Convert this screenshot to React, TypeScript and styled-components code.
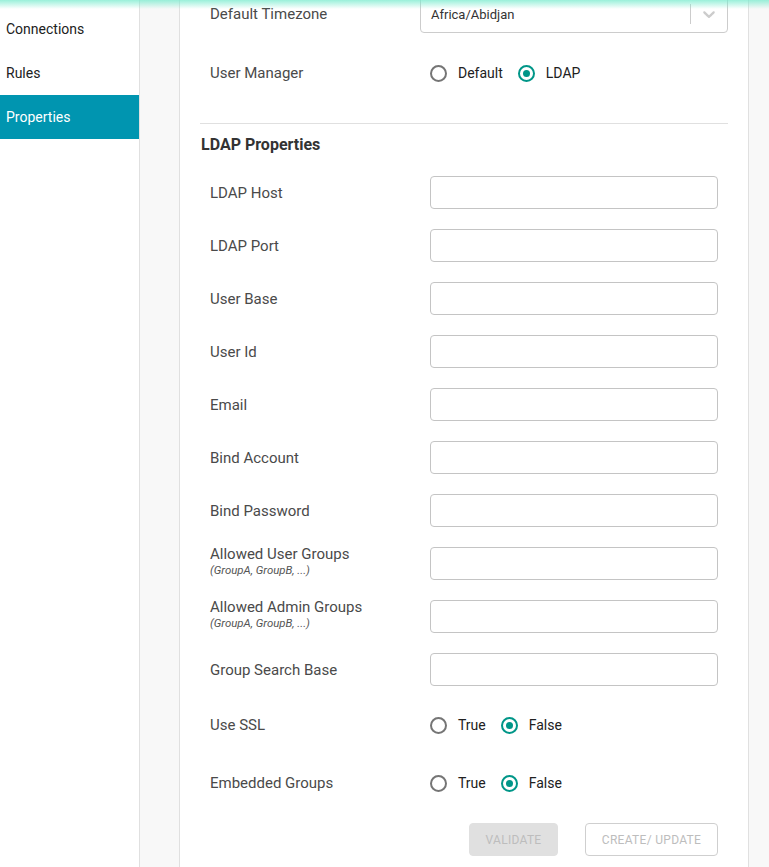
import React, { useState } from "react";
import styled, { createGlobalStyle } from "styled-components";

const GlobalStyle = createGlobalStyle`
  html, body {
    margin: 0;
    padding: 0;
    background: #f8f8f8;
    font-family: Roboto, "Liberation Sans", sans-serif;
    overflow: hidden;
  }
`;

const Page = styled.div`
  display: flex;
  height: 867px;
  overflow: hidden;
  position: relative;
`;

const HeaderGlow = styled.div`
  position: absolute;
  top: 0;
  left: 0;
  right: 0;
  height: 9px;
  background: linear-gradient(rgba(120, 235, 205, 0.75), rgba(160, 245, 220, 0));
  pointer-events: none;
  z-index: 5;
`;

const Sidebar = styled.nav`
  width: 139px;
  flex-shrink: 0;
  background: #fff;
  border-right: 1px solid #e0e0e0;
  padding-top: 7px;
  display: flex;
  flex-direction: column;
`;

const NavItem = styled.div<{ $active?: boolean }>`
  height: 44px;
  display: flex;
  align-items: center;
  padding-left: 6px;
  font-size: 14px;
  color: ${(p) => (p.$active ? "#fff" : "#212121")};
  background: ${(p) => (p.$active ? "#0095b0" : "transparent")};
  cursor: pointer;
`;

const Main = styled.main`
  flex: 1;
  padding-left: 39px;
  padding-right: 20px;
`;

const Card = styled.section`
  background: #fff;
  border-left: 1px solid #e0e0e0;
  border-right: 1px solid #e0e0e0;
  padding: 0 20px 40px 20px;
  margin-top: -5px;
`;

const TopRow = styled.div`
  display: grid;
  grid-template-columns: 210px 1fr;
  align-items: center;
  height: 38px;
  padding-left: 10px;
  & + & {
    margin-top: 21px;
  }
`;

const Label = styled.div`
  font-size: 15px;
  color: #4a4a4a;
  display: flex;
  flex-direction: column;
`;

const Hint = styled.span`
  font-size: 11.4px;
  font-style: italic;
  color: #555;
  margin-bottom: 6px;
`;

const Select = styled.div`
  height: 38px;
  box-sizing: border-box;
  border: 1px solid #ccc;
  border-radius: 4px;
  display: flex;
  align-items: center;
  padding-left: 10px;
  font-size: 13px;
  color: #333;
`;

const SelectValue = styled.span`
  flex: 1;
`;

const Separator = styled.span`
  width: 1px;
  align-self: stretch;
  margin: 8px 0;
  background: #ccc;
`;

const Chevron = styled.span`
  width: 36px;
  display: flex;
  justify-content: center;
  color: #ccc;
`;

const Divider = styled.hr`
  border: none;
  border-top: 1px solid #e0e0e0;
  margin: 31px 0 0 0;
`;

const Heading = styled.h3`
  margin: 11px 0 0 1px;
  font-size: 16px;
  line-height: 20px;
  font-weight: 700;
  color: #333;
`;

const FieldList = styled.div`
  display: flex;
  flex-direction: column;
  padding: 0 10px;
  margin-top: 21px;
`;

const FieldRow = styled.div<{ $tall?: boolean }>`
  display: grid;
  grid-template-columns: 220px 1fr;
  grid-template-rows: ${(p) => (p.$tall ? "38px" : "33px")};
  align-items: center;
  margin-bottom: 20px;
`;

const TextInput = styled.input`
  height: 33px;
  box-sizing: border-box;
  border: 1px solid #c4c4c4;
  border-radius: 4px;
  padding: 0 10px;
  font-size: 14px;
  outline: none;
`;

const RadioGroup = styled.div`
  display: flex;
  align-items: center;
  gap: 15px;
`;

const RadioOption = styled.label`
  display: flex;
  align-items: center;
  gap: 11px;
  font-size: 14px;
  color: #212121;
  cursor: pointer;
`;

const RadioCircle = styled.span<{ $checked?: boolean }>`
  width: 17px;
  height: 17px;
  box-sizing: border-box;
  border-radius: 50%;
  border: 2px solid ${(p) => (p.$checked ? "#009688" : "#757575")};
  display: flex;
  align-items: center;
  justify-content: center;
  &::after {
    content: "";
    width: 7px;
    height: 7px;
    border-radius: 50%;
    background: ${(p) => (p.$checked ? "#009688" : "transparent")};
  }
`;

const Actions = styled.div`
  display: flex;
  justify-content: flex-end;
  gap: 27px;
  margin-top: 1px;
`;

const Button = styled.button<{ $outlined?: boolean }>`
  height: 33px;
  box-sizing: border-box;
  border-radius: 4px;
  font-family: Roboto, "Liberation Sans", sans-serif;
  font-size: 12px;
  letter-spacing: 0.3px;
  text-transform: uppercase;
  color: #bdbdbd;
  padding: 0 15px;
  background: ${(p) => (p.$outlined ? "#fff" : "#e0e0e0")};
  border: 1px solid ${(p) => (p.$outlined ? "#cfcfcf" : "#e0e0e0")};
  width: ${(p) => (p.$outlined ? "133px" : "89px")};
`;

const ManagerChoice = styled.div`
  padding-left: 10px;
`;

function Radio({
  options,
  value,
  onChange,
}: {
  options: string[];
  value: string;
  onChange: (v: string) => void;
}) {
  return (
    <RadioGroup>
      {options.map((o) => (
        <RadioOption key={o} onClick={() => onChange(o)}>
          <RadioCircle $checked={o === value} />
          {o}
        </RadioOption>
      ))}
    </RadioGroup>
  );
}

const fields: { label: string; hint?: string }[] = [
  { label: "LDAP Host" },
  { label: "LDAP Port" },
  { label: "User Base" },
  { label: "User Id" },
  { label: "Email" },
  { label: "Bind Account" },
  { label: "Bind Password" },
  { label: "Allowed User Groups", hint: "(GroupA, GroupB, ...)" },
  { label: "Allowed Admin Groups", hint: "(GroupA, GroupB, ...)" },
  { label: "Group Search Base" },
];

export default function App() {
  const [manager, setManager] = useState("LDAP");
  const [ssl, setSsl] = useState("False");
  const [embedded, setEmbedded] = useState("False");

  return (
    <>
      <GlobalStyle />
      <Page>
        <HeaderGlow />
        <Sidebar>
          <NavItem>Connections</NavItem>
          <NavItem>Rules</NavItem>
          <NavItem $active>Properties</NavItem>
        </Sidebar>
        <Main>
          <Card>
            <TopRow>
              <Label>Default Timezone</Label>
              <Select>
                <SelectValue>Africa/Abidjan</SelectValue>
                <Separator />
                <Chevron>
                  <svg width="20" height="20" viewBox="0 0 20 20" fill="currentColor">
                    <path d="M4.516 7.548c0.436-0.446 1.043-0.481 1.576 0l3.908 3.747 3.908-3.747c0.533-0.481 1.141-0.446 1.574 0 0.436 0.445 0.408 1.197 0 1.615-0.406 0.418-4.695 4.502-4.695 4.502-0.217 0.223-0.502 0.335-0.787 0.335s-0.57-0.112-0.789-0.335c0 0-4.287-4.084-4.695-4.502s-0.436-1.170 0-1.615z" />
                  </svg>
                </Chevron>
              </Select>
            </TopRow>
            <TopRow>
              <Label>User Manager</Label>
              <ManagerChoice>
                <Radio options={["Default", "LDAP"]} value={manager} onChange={setManager} />
              </ManagerChoice>
            </TopRow>
            <Divider />
            <Heading>LDAP Properties</Heading>
            <FieldList>
              {fields.map((f) => (
                <FieldRow key={f.label}>
                  <Label>
                    {f.label}
                    {f.hint && <Hint>{f.hint}</Hint>}
                  </Label>
                  <TextInput />
                </FieldRow>
              ))}
              <FieldRow $tall>
                <Label>Use SSL</Label>
                <Radio options={["True", "False"]} value={ssl} onChange={setSsl} />
              </FieldRow>
              <FieldRow $tall>
                <Label>Embedded Groups</Label>
                <Radio options={["True", "False"]} value={embedded} onChange={setEmbedded} />
              </FieldRow>
              <Actions>
                <Button disabled>Validate</Button>
                <Button $outlined disabled>
                  Create/ Update
                </Button>
              </Actions>
            </FieldList>
          </Card>
        </Main>
      </Page>
    </>
  );
}
